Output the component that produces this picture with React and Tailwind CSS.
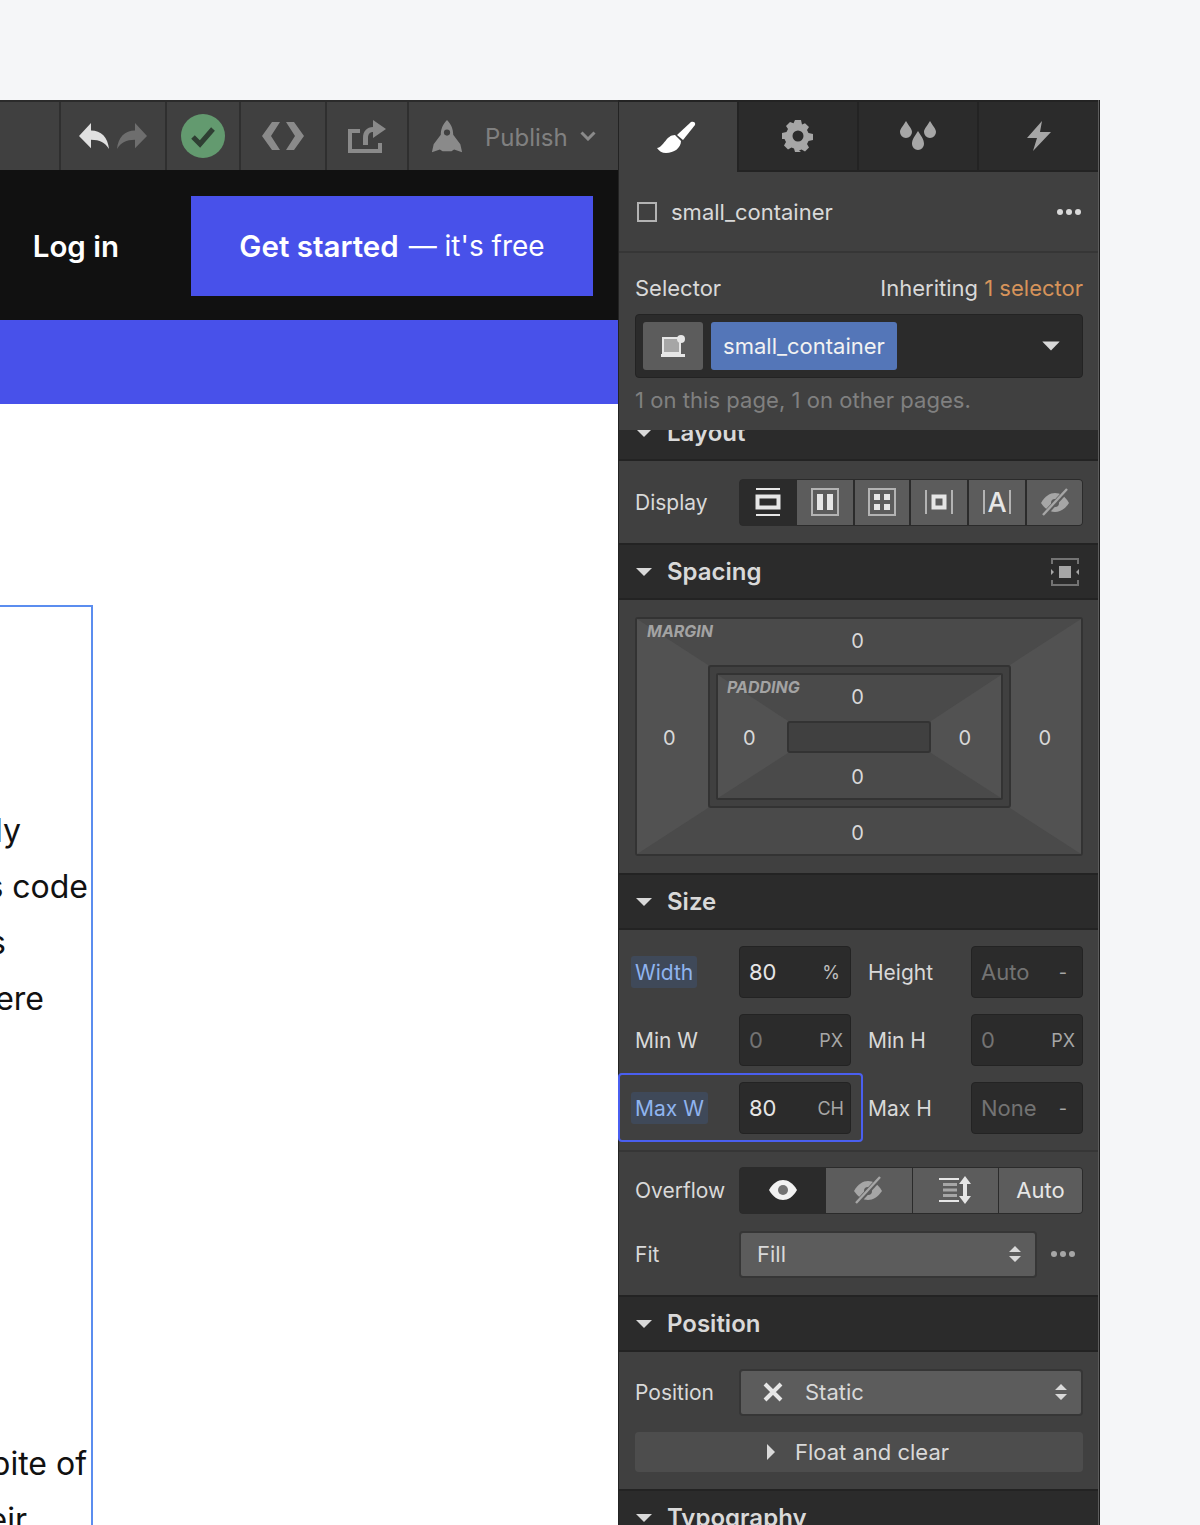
import React from "react"

const Caret = ({ className = "" }) => (
  <svg width="16" height="10" viewBox="0 0 16 10" className={className}>
    <path d="M0 1h16L8 9z" fill="#d9d9d9" />
  </svg>
)

const Updown = () => (
  <svg width="14" height="18" viewBox="0 0 14 18" fill="#d9d9d9">
    <path d="M7 1l6 6H1zM7 17l6-6H1z" />
  </svg>
)

const Dots = ({ color = "#d9d9d9" }) => (
  <svg width="26" height="8" viewBox="0 0 26 8" fill={color}>
    <circle cx="4" cy="4" r="3" />
    <circle cx="13" cy="4" r="3" />
    <circle cx="22" cy="4" r="3" />
  </svg>
)

const EyeOff = ({ color = "#a6a6a6" }) => (
  <svg width="30" height="28" viewBox="0 0 30 28">
    <path d="M1 15C5 8 10 5 15 5c5 0 10 3 14 10-4 6-9 9-14 9S5 21 1 15z" fill={color} />
    <circle cx="15" cy="15" r="4" fill="#5c5c5c" />
    <path d="M4 27L27 2" stroke="#5c5c5c" strokeWidth="5" />
    <path d="M3 27L27 1" stroke={color} strokeWidth="2.4" />
  </svg>
)

const SectionHeader = ({ title, right }) => (
  <div className="h-[57px] shrink-0 bg-[#2b2b2b] border-t-2 border-b-2 border-[#232323] flex items-center pl-[17px] pr-[17px] justify-between">
    <div className="flex items-center">
      <Caret className="mr-[15px]" />
      <span className="text-[24px] font-semibold text-[#d9d9d9]">{title}</span>
    </div>
    {right}
  </div>
)

const Field = ({ value, unit, dim, unitCls = "" }) => (
  <div className="w-[112px] h-[52px] shrink-0 bg-[#2b2b2b] border border-[#232323] rounded-[4px] flex items-center justify-between pl-[9px] pr-[7px]">
    <span className={dim ? "text-[22px] text-[#737373]" : "text-[22px] text-[#e6e6e6]"}>{value}</span>
    <span className={"text-[18px] text-[#a6a6a6] " + unitCls}>{unit}</span>
  </div>
)

const Label = ({ children, active, narrow }) => (
  <div className={(narrow ? "w-[103px]" : "w-[104px]") + " shrink-0 text-[21px]"}>
    {active ? (
      <span className="-ml-[4px] inline-block px-[4px] h-[32px] leading-[34px] rounded-[3px] bg-[#3f4959] text-[#8fb4ef]">{children}</span>
    ) : (
      <span className="block pt-[2px]">{children}</span>
    )}
  </div>
)

const Seg = ({ children, active, w }) => (
  <div
    className={
      "h-full flex items-center justify-center shrink-0 " +
      w +
      (active ? " bg-[#2b2b2b]" : " bg-[#5c5c5c]")
    }
  >
    {children}
  </div>
)

const LeftPane = () => (
  <div className="w-[618px] shrink-0 flex flex-col overflow-hidden">
    {/* designer toolbar */}
    <div className="h-[72px] shrink-0 bg-[#404040] border-t-2 border-b-2 border-t-[#2b2b2b] border-b-[#111111] flex">
      <div className="w-[61px] border-r-2 border-[#2f2f2f]" />
      <div className="w-[106px] border-r-2 border-[#2f2f2f] flex items-center justify-center gap-[8px]">
        <svg width="30" height="28" viewBox="0 0 30 30" preserveAspectRatio="none" fill="#e0e0e0">
          <path d="M0 15L12 1v8c10 0 17 7 18 20-4-7-9-10-18-10v9z" />
        </svg>
        <svg width="30" height="28" viewBox="0 0 30 30" preserveAspectRatio="none" fill="#6e6e6e">
          <path d="M30 15L18 1v8C8 9 1 16 0 29c4-7 9-10 18-10v9z" />
        </svg>
      </div>
      <div className="w-[74px] border-r-2 border-[#2f2f2f] flex items-center justify-center">
        <svg width="44" height="44" viewBox="0 0 44 44">
          <circle cx="22" cy="22" r="22" fill="#639a6f" />
          <path d="M12 23l7 7 13-15" fill="none" stroke="#2f3f33" strokeWidth="5" />
        </svg>
      </div>
      <div className="w-[86px] border-r-2 border-[#2f2f2f] flex items-center justify-center">
        <svg width="42" height="28" viewBox="0 0 42 34" preserveAspectRatio="none" fill="#8a8a8a">
          <path d="M10 0h8L9 17l9 17h-8L0 17zM32 0h-8l9 17-9 17h8l10-17z" />
        </svg>
      </div>
      <div className="w-[82px] border-r-2 border-[#2f2f2f] flex items-center justify-center">
        <svg width="40" height="34" viewBox="0 0 40 34" fill="none">
          <path d="M13 12H3v20h30V24" stroke="#8a8a8a" strokeWidth="4" />
          <path d="M16 26v-7c0-7 4-11 10-11V1l13 9-13 9v-6c-3 0-5 2-5 6v7z" fill="#8a8a8a" />
        </svg>
      </div>
      <div className="flex-1 flex items-center pl-[22px]">
        <svg width="32" height="33" viewBox="0 0 36 38" preserveAspectRatio="none" fill="#8a8a8a">
          <path fillRule="evenodd" d="M18 0c5 5 7 11 7 17l8 11 2 9-9-3-3 2h-10l-3-2-9 3 2-9 8-11C11 11 13 5 18 0zm0 11a3.500 3.500 0 100 7 3.500 3.500 0 000-7z" />
        </svg>
        <span className="ml-[22px] mt-[3px] text-[24px] text-[#808080]">Publish</span>
        <svg width="16" height="10" viewBox="0 0 16 10" className="ml-[12px]" fill="none">
          <path d="M1.500 1.500L8 8l6.500-6.500" stroke="#8a8a8a" strokeWidth="3" />
        </svg>
      </div>
    </div>

    {/* site nav */}
    <div className="h-[148px] shrink-0 bg-[#111111] flex items-center justify-end pr-[25px]">
      <span className="text-[29.5px] font-semibold text-white mr-[72px]">Log in</span>
      <div className="w-[402px] h-[100px] bg-[#4851ea] flex items-center justify-center text-white">
        <span className="text-[29.5px] font-semibold">Get started</span>
        <span className="ml-[10px] text-[28px]">— it's free</span>
      </div>
    </div>
    <div className="h-[84px] shrink-0 bg-[#4851ea]" />

    {/* page body */}
    <div className="flex-1 bg-white pt-[201px]">
      <div className="w-[93px] h-[1000px] border-t-2 border-r-2 border-[#5b8def] text-[32px] leading-[56px] text-[#111111] pt-[196px]">
        <div className="w-[21px] flex justify-end whitespace-nowrap">ly</div>
        <div className="w-[88px] flex justify-end whitespace-nowrap">s code</div>
        <div className="w-[6px] flex justify-end whitespace-nowrap">s</div>
        <div className="w-[44px] flex justify-end whitespace-nowrap">ere</div>
        <div className="w-[87px] flex justify-end whitespace-nowrap mt-[409px]">bite of</div>
        <div className="w-[27px] flex justify-end whitespace-nowrap">eir</div>
      </div>
    </div>
  </div>
)

const SpacingBox = () => (
  <div className="relative w-[448px] h-[239px] border-2 border-[#333333] rounded-[3px] bg-[#4a4a4a] text-[20px] text-[#d9d9d9]">
    <svg className="absolute inset-0 w-full h-full" viewBox="0 0 444 235" preserveAspectRatio="none">
      <path d="M0 0L71 46V189L0 235zM444 0L373 46V189L444 235z" fill="#525252" />
    </svg>
    <div className="absolute left-[10px] top-0 text-[16px] font-bold italic text-[#a3a3a3]">MARGIN</div>
    <div className="absolute inset-x-[-4px] top-[7px] text-center pr-[3px]">0</div>
    <div className="absolute inset-x-[-4px] bottom-[6px] text-center pr-[3px]">0</div>
    <div className="absolute left-[26px] top-[104px]">0</div>
    <div className="absolute right-[30px] top-[104px]">0</div>

    <div className="absolute left-[71px] top-[46px] w-[303px] h-[143px] bg-[#404040] border-2 border-[#333333] rounded-[3px] p-[6px]">
      <div className="relative w-full h-full border-2 border-[#333333] rounded-[2px] bg-[#4a4a4a]">
        <svg className="absolute inset-0 w-full h-full" viewBox="0 0 283 123" preserveAspectRatio="none">
          <path d="M0 0L70 46V78L0 123zM283 0L213 46V78L283 123z" fill="#525252" />
        </svg>
        <div className="absolute left-[9px] top-0 text-[16px] font-bold italic text-[#a3a3a3]">PADDING</div>
        <div className="absolute inset-x-0 top-[7px] text-center pr-[4px]">0</div>
        <div className="absolute inset-x-0 bottom-[6px] text-center pr-[4px]">0</div>
        <div className="absolute left-[25px] top-[48px]">0</div>
        <div className="absolute right-[30px] top-[48px]">0</div>
        <div className="absolute left-[69px] top-[46px] w-[144px] h-[32px] bg-[#404040] border-2 border-[#333333] rounded-[3px]" />
      </div>
    </div>
  </div>
)

const RightPane = () => (
  <div className="w-[482px] shrink-0 h-[1425px] bg-[#404040] border-l border-[#232323] flex flex-col text-[22px] text-[#d9d9d9] relative">
    <div className="absolute right-0 inset-y-0 w-[2px] bg-[#5c5c5c] border-r border-[#1f1f1f] z-10" />

    {/* tabs */}
    <div className="h-[72px] shrink-0 flex bg-[#2b2b2b] border-t-2 border-[#232323]">
      <div className="w-[118px] bg-[#404040] flex items-center justify-center">
        <svg width="40" height="32" viewBox="0 0 40 32" fill="#ffffff" className="mr-[4px]">
          <path d="M35 1c2-1 5 0 4 3L27 19l-6-5z" />
          <path d="M1 27c7-1 9-13 18-13l6 6c0 7-7 12-15 12-4 0-7-2-9-5z" />
        </svg>
      </div>
      <div className="w-[120px] border-l-2 border-[#232323] border-b-2 flex items-center justify-center">
        <svg width="32" height="32" viewBox="0 0 32 32" fill="#a6a6a6">
          <path fillRule="evenodd" d="M13 0h6l1 4.500 3-1.300 4 3.800-2 3 1.500 3 4.500.9v6l-4.500 1-1.500 3 2 3.500-4 4-3.500-2-2.500 1L19 32h-6l-1-3.600-2.500-1-3.500 2-4-4 2-3.500-1.500-3L0 19v-6l4.500-1 1.500-3-2-3 4-4 3.500 1.300zM16 10.500a5.500 5.500 0 100 11 5.500 5.500 0 000-11z" />
        </svg>
      </div>
      <div className="w-[120px] border-l-2 border-[#232323] border-b-2 flex items-center justify-center">
        <svg width="36" height="30" viewBox="0 0 36 30" fill="#a6a6a6">
          <path d="M6 0c3 5 6 8 6 11a6 6 0 01-12 0C0 8 3 5 6 0zM30 0c3 5 6 8 6 11a6 6 0 01-12 0c0-3 3-6 6-11zM18 10c3 5 6 8 6 13a6 6 0 01-12 0c0-5 3-8 6-13z" />
        </svg>
      </div>
      <div className="flex-1 border-l-2 border-[#232323] border-b-2 flex items-center justify-center">
        <svg width="26" height="30" viewBox="0 0 26 30" fill="#a6a6a6">
          <path d="M15 0L0 17h10L6 30l18-19H13z" />
        </svg>
      </div>
    </div>

    {/* element */}
    <div className="h-[81px] shrink-0 border-b-2 border-[#363636] flex items-center justify-between pl-[18px] pr-[18px] pt-[1px]">
      <div className="flex items-center">
        <div className="w-[20px] h-[20px] border-2 border-[#b3b3b3] mr-[14px]" />
        <span>small_container</span>
      </div>
      <Dots />
    </div>

    {/* selector */}
    <div className="h-[177px] shrink-0 px-[16px] pt-[20px]">
      <div className="flex justify-between leading-[30px]">
        <span>Selector</span>
        <span className="mr-[1px]">
          Inheriting <span className="text-[#d6935a]">1 selector</span>
        </span>
      </div>
      <div className="mt-[11px] w-[448px] h-[64px] bg-[#2b2b2b] border border-[#232323] rounded-[4px] flex items-center pl-[7px] pr-[23px]">
        <div className="w-[60px] h-[48px] bg-[#5c5c5c] rounded-[3px] flex items-center justify-center">
          <svg width="26" height="24" viewBox="0 0 26 24">
            <path d="M3 4h17v15H3z" fill="#a6a6a6" stroke="#e6e6e6" strokeWidth="2" />
            <path d="M1 20h24v3H1z" fill="#e6e6e6" />
            <circle cx="21" cy="5" r="4" fill="#e6e6e6" />
          </svg>
        </div>
        <div className="ml-[8px] w-[186px] h-[48px] bg-[#5476b8] rounded-[3px] flex items-center justify-center text-[#f2f2f2]">
          small_container
        </div>
        <Caret className="ml-auto scale-110" />
      </div>
      <div className="mt-[7px] leading-[30px] tracking-[0.05px] text-[#808080]">1 on this page, 1 on other pages.</div>
    </div>

    {/* layout, scrolled under the selector */}
    <div className="h-[31px] shrink-0 overflow-hidden flex flex-col justify-end">
      <SectionHeader title="Layout" />
    </div>
    <div className="h-[82px] shrink-0 flex items-center pl-[16px] pr-[15px]">
      <Label>Display</Label>
      <div className="h-[47px] w-[344px] flex bg-[#2b2b2b] border border-[#2b2b2b] rounded-[4px] overflow-hidden gap-[2px]">
        <Seg active w="w-[55px]">
          <svg width="26" height="28" viewBox="0 0 26 28" fill="none" stroke="#e6e6e6">
            <path d="M1 1h24M1 27h24" strokeWidth="2" />
            <path d="M2.500 8.500h21v11h-21z" strokeWidth="4" />
          </svg>
        </Seg>
        <Seg w="w-[56px]">
          <svg width="28" height="28" viewBox="0 0 28 28">
            <path d="M1 1h26v26H1z" fill="none" stroke="#b3b3b3" strokeWidth="2" />
            <path d="M6 6h6v16H6zM16 6h6v16h-6z" fill="#e6e6e6" />
          </svg>
        </Seg>
        <Seg w="w-[54px]">
          <svg width="28" height="28" viewBox="0 0 28 28">
            <path d="M1 1h26v26H1z" fill="none" stroke="#b3b3b3" strokeWidth="2" />
            <path d="M6 6h6v6H6zM16 6h6v6h-6zM6 16h6v6H6zM16 16h6v6h-6z" fill="#e6e6e6" />
          </svg>
        </Seg>
        <Seg w="w-[56px]">
          <svg width="28" height="26" viewBox="0 0 28 26" fill="none">
            <path d="M1 1v24M27 1v24" stroke="#b3b3b3" strokeWidth="2" />
            <path d="M8.500 7.500h11v11h-11z" stroke="#e6e6e6" strokeWidth="4" />
          </svg>
        </Seg>
        <Seg w="w-[56px]">
          <div className="flex items-center">
            <span className="w-[2px] h-[24px] bg-[#b3b3b3]" />
            <span className="mx-[2px] text-[27px] font-medium leading-none text-[#e6e6e6]">A</span>
            <span className="w-[2px] h-[24px] bg-[#b3b3b3]" />
          </div>
        </Seg>
        <Seg w="flex-1">
          <EyeOff />
        </Seg>
      </div>
    </div>

    <SectionHeader
      title="Spacing"
      right={
        <svg width="28" height="28" viewBox="0 0 28 28" className="mr-[4px]">
          <path d="M1 6V1h26v5M1 22v5h26v-5" fill="none" stroke="#737373" strokeWidth="2" />
          <path d="M8 8h12v12H8z" fill="#a6a6a6" />
          <path d="M0 11l3 3-3 3zM28 11l-3 3 3 3z" fill="#a6a6a6" />
        </svg>
      }
    />
    <div className="h-[273px] shrink-0 pl-[16px] pt-[17px]">
      <SpacingBox />
    </div>

    <SectionHeader title="Size" />
    <div className="h-[222px] shrink-0 pl-[16px] pt-[16px] flex flex-col gap-[16px] border-b-2 border-[#363636] relative">
      <div className="flex items-center">
        <Label active>Width</Label>
        <Field value="80" unit="%" unitCls="pr-[3px] text-[#bfbfbf]" />
        <div className="w-[17px]" />
        <Label narrow>Height</Label>
        <Field value="Auto" unit="-" dim unitCls="pr-[8px]" />
      </div>
      <div className="flex items-center">
        <Label>Min W</Label>
        <Field value="0" unit="PX" dim />
        <div className="w-[17px]" />
        <Label narrow>Min H</Label>
        <Field value="0" unit="PX" dim />
      </div>
      <div className="flex items-center">
        <Label active>Max W</Label>
        <Field value="80" unit="CH" unitCls="-mr-[1px]" />
        <div className="w-[17px]" />
        <Label narrow>Max H</Label>
        <Field value="None" unit="-" dim unitCls="pr-[8px]" />
      </div>
      <div className="absolute -left-[1px] top-[143px] w-[245px] h-[69px] border-2 border-[#4a5ff0] rounded-[4px]" />
    </div>

    <div className="h-[143px] shrink-0 pl-[16px] pr-[15px] pt-[14px]">
      <div className="flex items-center h-[48px]">
        <Label>Overflow</Label>
        <div className="h-[47px] w-[344px] flex bg-[#2b2b2b] border border-[#2b2b2b] rounded-[4px] overflow-hidden gap-[1px]">
          <Seg active w="w-[85px]">
            <svg width="28" height="20" viewBox="0 0 28 20">
              <path d="M0 10C4 3 9 0 14 0s10 3 14 10c-4 7-9 10-14 10S4 17 0 10z" fill="#f2f2f2" />
              <circle cx="14" cy="10" r="5" fill="#737373" />
            </svg>
          </Seg>
          <Seg w="w-[86px]">
            <div className="mr-[3px]">
              <EyeOff />
            </div>
          </Seg>
          <Seg w="w-[85px]">
            <svg width="32" height="28" viewBox="0 0 32 28" className="mr-[2px]">
              <path d="M0 3h20M0 25h20" stroke="#e6e6e6" strokeWidth="2" />
              <path d="M4 7h14v3H4zM4 12.500h14v3H4zM4 18h14v3H4z" fill="#a6a6a6" />
              <path d="M26 0l6 8h-4v12h4l-6 8-6-8h4V8h-4z" fill="#e6e6e6" />
            </svg>
          </Seg>
          <Seg w="flex-1">
            <span className="text-[#e6e6e6]">Auto</span>
          </Seg>
        </div>
      </div>
      <div className="flex items-center h-[48px] mt-[16px]">
        <Label>Fit</Label>
        <div className="w-[298px] h-[47px] bg-[#5c5c5c] border-2 border-[#363636] rounded-[4px] flex items-center justify-between pl-[16px] pr-[13px]">
          <span>Fill</span>
          <Updown />
        </div>
        <div className="ml-[13px]">
          <Dots color="#a6a6a6" />
        </div>
      </div>
    </div>

    <SectionHeader title="Position" />
    <div className="h-[137px] shrink-0 pl-[16px] pr-[15px] pt-[16px]">
      <div className="flex items-center h-[48px]">
        <Label>Position</Label>
        <div className="w-[344px] h-[47px] bg-[#5c5c5c] border-2 border-[#363636] rounded-[4px] flex items-center pl-[22px] pr-[13px]">
          <svg width="20" height="20" viewBox="0 0 20 20">
            <path d="M2 2l16 16M18 2L2 18" stroke="#e6e6e6" strokeWidth="4" />
          </svg>
          <span className="ml-[22px]">Static</span>
          <div className="ml-auto">
            <Updown />
          </div>
        </div>
      </div>
      <div className="mt-[16px] w-[448px] h-[40px] bg-[#4d4d4d] rounded-[4px] flex items-center justify-center pr-[3px]">
        <svg width="10" height="16" viewBox="0 0 10 16" className="mr-[19px]">
          <path d="M1 0l8 8-8 8z" fill="#d9d9d9" />
        </svg>
        <span>Float and clear</span>
      </div>
    </div>

    <SectionHeader title="Typography" />
  </div>
)

export default function App() {
  return (
    <div className="w-[1200px] h-[1525px] overflow-hidden bg-[#f5f6f8] pt-[100px] font-[Inter,sans-serif]">
      <div className="flex w-[1100px] h-[1425px]">
        <LeftPane />
        <RightPane />
      </div>
    </div>
  )
}
